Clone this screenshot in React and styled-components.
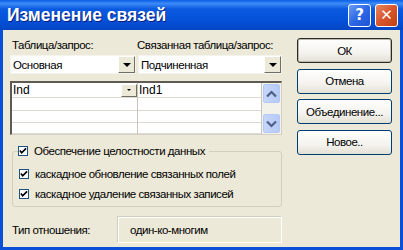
import React from 'react'
import styled, { createGlobalStyle } from 'styled-components'

const Global = createGlobalStyle`
  html, body { margin: 0; padding: 0; background: #fff; }
  body { font-family: "Liberation Sans", Arial, sans-serif; }
`

const Window = styled.div`
  width: 403px;
  height: 250px;
  box-sizing: border-box;
  background: #0a4fd8;
  padding: 0 3px 3px 3px;
  display: flex;
  flex-direction: column;
  overflow: hidden;
`

const TitleBar = styled.div`
  height: 30px;
  flex: none;
  display: flex;
  align-items: center;
  padding: 0 5px 0 7px;
  margin: 0 -3px;
  background: linear-gradient(to bottom, #0a5fe8 0%, #3d8af7 12%, #0a5ae0 30%, #0450d8 70%, #0346c4 100%);
`

const Title = styled.div`
  flex: 1;
  color: #fff;
  font-family: "Liberation Sans", Arial, sans-serif;
  font-weight: bold;
  font-size: 17.5px;
  text-shadow: 1px 1px 0 #0a1e78;
`

const CapButton = styled.div`
  width: 23px;
  height: 23px;
  margin-left: 4px;
  border: 1px solid #fff;
  border-radius: 3px;
  box-sizing: border-box;
  display: flex;
  align-items: center;
  justify-content: center;
  color: #fff;
  font-family: "DejaVu Sans", sans-serif;
  font-weight: bold;
  font-size: 15px;
  background: ${p => p.$close
    ? 'linear-gradient(135deg, #e8875f 0%, #d9542a 50%, #c23f14 100%)'
    : 'linear-gradient(135deg, #6a9cf5 0%, #2d68e6 50%, #1e54d4 100%)'};
`

const Body = styled.div`
  flex: 1;
  background: #ece9d8;
  display: flex;
  padding: 7px 8px 0 7px;
  gap: 15px;
  font-size: 11.5px;
  letter-spacing: -0.45px;
  color: #000;
`

const LeftCol = styled.div`
  width: 272px;
  display: flex;
  flex-direction: column;
`

const LabelRow = styled.div`
  display: flex;
  height: 15px;
  align-items: center;
  padding-left: 2px;
  white-space: nowrap;
`

const Label = styled.div`
  width: ${p => p.$w}px;
`

const ComboRow = styled.div`
  display: flex;
  gap: 2px;
  margin-top: 3px;
`

const Combo = styled.div`
  width: ${p => p.$w}px;
  height: 19px;
  box-sizing: border-box;
  background: #fff;
  border: 1px solid #f4f3ee;
  display: flex;
  align-items: center;
  padding-left: 2px;
`

const ComboText = styled.div`
  flex: 1;
`

const ArrowBtn = styled.div`
  width: ${p => p.$small ? 16 : 17}px;
  height: ${p => p.$small ? 13 : 17}px;
  background: #ece9d8;
  box-sizing: border-box;
  border-top: 1px solid #fff;
  border-left: 1px solid #fff;
  border-right: 1px solid #716f64;
  border-bottom: 1px solid #716f64;
  display: flex;
  align-items: center;
  justify-content: center;
  &::after {
    content: '';
    border-left: ${p => p.$small ? 2 : 4}px solid transparent;
    border-right: ${p => p.$small ? 2 : 4}px solid transparent;
    border-top: ${p => p.$small ? 2 : 4}px solid #000;
  }
`

const Grid = styled.div`
  margin-top: 7px;
  height: 54px;
  box-sizing: border-box;
  background: #fff;
  border-top: 2px solid #5d5b53;
  border-left: 2px solid #5d5b53;
  border-right: 1px solid #d4d0c8;
  border-bottom: 1px solid #d4d0c8;
  display: flex;
`

const GridCol = styled.div`
  width: ${p => p.$w}px;
  border-right: 1px solid #c8c6bc;
  display: flex;
  flex-direction: column;
`

const Cell = styled.div`
  height: ${p => p.$h}px;
  box-sizing: border-box;
  border-bottom: 1px solid #dcdad2;
  display: flex;
  align-items: center;
  padding-left: 1px;
  font-size: 12px;
  letter-spacing: 0;
`

const ScrollBar = styled.div`
  flex: 1;
  background: #f2f1ea;
  display: flex;
  flex-direction: column;
  justify-content: space-between;
  padding: 1px 0;
`

const ScrollBtn = styled.div`
  height: 17px;
  margin: 0 1px;
  background: linear-gradient(to right, #c5d6fc, #b6caf6);
  border: 1px solid #b4c8f6;
  border-radius: 2px;
  display: flex;
  align-items: center;
  justify-content: center;
`

const Group = styled.fieldset`
  margin: 8px 0 0 2px;
  padding: 7px 0 0 6px;
  border: 1px solid #d0d0bf;
  border-radius: 3px;
  height: 64px;
  box-sizing: border-box;
  display: flex;
  flex-direction: column;
  gap: 4px;
  width: 270px;
`

const Legend = styled.legend`
  padding: 0 4px 0 0;
  margin-left: -1px;
`

const CheckRow = styled.div`
  display: flex;
  align-items: center;
  gap: 6px;
  height: 16px;
`

const Box = styled.div`
  width: 10px;
  height: 10px;
  box-sizing: border-box;
  border: 1px solid #1c5180;
  background: #fff;
  display: flex;
  align-items: center;
  justify-content: center;
`

const TypeRow = styled.div`
  display: flex;
  align-items: center;
  margin-top: 9px;
  padding-left: 2px;
`

const TypeLabel = styled.div`
  width: 105px;
`

const TypeValue = styled.div`
  width: 165px;
  height: 27px;
  box-sizing: border-box;
  border: 1px solid #d0cec2;
  border-right-color: #fff;
  border-bottom-color: #fff;
  box-shadow: inset 1px 1px 0 #fff;
  display: flex;
  align-items: center;
  padding-left: 12px;
`

const RightCol = styled.div`
  width: 95px;
  display: flex;
  flex-direction: column;
  gap: 5.5px;
  padding-top: 1px;
`

const Button = styled.div`
  height: 25px;
  box-sizing: border-box;
  border: 1px solid ${p => p.$default ? '#2a2a2a' : '#003c74'};
  border-radius: 3px;
  background: linear-gradient(to bottom, #fefefd 0%, #f4f3ee 60%, #e3e0d4 100%);
  display: flex;
  align-items: center;
  justify-content: center;
  box-shadow: ${p => p.$default ? 'inset 0 0 0 1px #bcb9a9' : 'none'};
`

const Check = () => (
  <svg width="8" height="8" viewBox="0 0 9 9">
    <path d="M1 4 L3 6.5 L8 1.5" stroke="#000" strokeWidth="1.9" fill="none" />
  </svg>
)

const Chevron = ({ up }) => (
  <svg width="11" height="8" viewBox="0 0 11 8">
    <path d={up ? 'M1 6.5 L5.5 2 L10 6.5' : 'M1 1.5 L5.5 6 L10 1.5'} stroke="#4d6185" strokeWidth="2.2" fill="none" />
  </svg>
)

export default function App() {
  return (
    <>
      <Global />
      <Window>
        <TitleBar>
          <Title>Изменение связей</Title>
          <CapButton>?</CapButton>
          <CapButton $close>✕</CapButton>
        </TitleBar>
        <Body>
          <LeftCol>
            <LabelRow>
              <Label $w={125}>Таблица/запрос:</Label>
              <Label $w={145}>Связанная таблица/запрос:</Label>
            </LabelRow>
            <ComboRow>
              <Combo $w={126}><ComboText>Основная</ComboText><ArrowBtn /></Combo>
              <Combo $w={144}><ComboText>Подчиненная</ComboText><ArrowBtn /></Combo>
            </ComboRow>
            <Grid>
              <GridCol $w={125}>
                <Cell $h={15}><ComboText>Ind</ComboText><ArrowBtn $small /></Cell>
                <Cell $h={13} />
                <Cell $h={13} />
                <Cell $h={11} />
              </GridCol>
              <GridCol $w={123}>
                <Cell $h={15}>Ind1</Cell>
                <Cell $h={13} />
                <Cell $h={13} />
                <Cell $h={11} />
              </GridCol>
              <ScrollBar>
                <ScrollBtn><Chevron up /></ScrollBtn>
                <ScrollBtn><Chevron /></ScrollBtn>
              </ScrollBar>
            </Grid>
            <Group>
              <Legend>
                <CheckRow><Box><Check /></Box>Обеспечение целостности данных</CheckRow>
              </Legend>
              <CheckRow><Box><Check /></Box>каскадное обновление связанных полей</CheckRow>
              <CheckRow><Box><Check /></Box>каскадное удаление связанных записей</CheckRow>
            </Group>
            <TypeRow>
              <TypeLabel>Тип отношения:</TypeLabel>
              <TypeValue>один-ко-многим</TypeValue>
            </TypeRow>
          </LeftCol>
          <RightCol>
            <Button $default>ОК</Button>
            <Button>Отмена</Button>
            <Button>Объединение...</Button>
            <Button>Новое..</Button>
          </RightCol>
        </Body>
      </Window>
    </>
  )
}
